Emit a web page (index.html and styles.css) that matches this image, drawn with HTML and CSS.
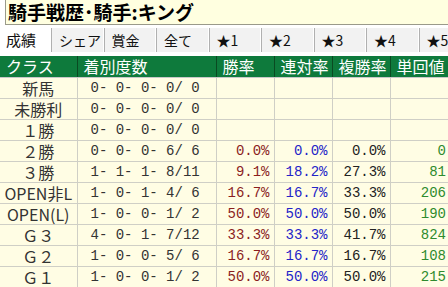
FILE: index.html
```html
<!DOCTYPE html>
<html lang="ja">
<head>
<meta charset="utf-8">
<link rel="stylesheet" href="styles.css">
</head>
<body>
<div class="title">騎手戦歴･騎手:キング</div>
<div class="tabs">
  <div class="tab active">成績</div>
  <div class="tab">シェア</div>
  <div class="tab">賞金</div>
  <div class="tab">全て</div>
  <div class="tab">★1</div>
  <div class="tab">★2</div>
  <div class="tab">★3</div>
  <div class="tab">★4</div>
  <div class="tab">★5</div>
</div>
<table class="grid">
  <thead>
    <tr><th class="h-class">クラス</th><th class="h-rec">着別度数</th><th class="h-pct">勝率</th><th class="h-pct">連対率</th><th class="h-pct">複勝率</th><th class="h-last">単回値</th></tr>
  </thead>
  <tbody>
    <tr><td class="cls">新馬</td><td class="rec">0- 0- 0- 0/ 0</td><td></td><td></td><td></td><td></td></tr>
    <tr><td class="cls">未勝利</td><td class="rec">0- 0- 0- 0/ 0</td><td></td><td></td><td></td><td></td></tr>
    <tr><td class="cls">１勝</td><td class="rec">0- 0- 0- 0/ 0</td><td></td><td></td><td></td><td></td></tr>
    <tr><td class="cls">２勝</td><td class="rec">0- 0- 0- 6/ 6</td><td class="num win">0.0%</td><td class="num ren">0.0%</td><td class="num fuku">0.0%</td><td class="num ret">0</td></tr>
    <tr><td class="cls">３勝</td><td class="rec">1- 1- 1- 8/11</td><td class="num win">9.1%</td><td class="num ren">18.2%</td><td class="num fuku">27.3%</td><td class="num ret">81</td></tr>
    <tr><td class="cls">OPEN非L</td><td class="rec">1- 0- 1- 4/ 6</td><td class="num win">16.7%</td><td class="num ren">16.7%</td><td class="num fuku">33.3%</td><td class="num ret">206</td></tr>
    <tr><td class="cls">OPEN(L)</td><td class="rec">1- 0- 0- 1/ 2</td><td class="num win">50.0%</td><td class="num ren">50.0%</td><td class="num fuku">50.0%</td><td class="num ret">190</td></tr>
    <tr><td class="cls">Ｇ３</td><td class="rec">4- 0- 1- 7/12</td><td class="num win">33.3%</td><td class="num ren">33.3%</td><td class="num fuku">41.7%</td><td class="num ret">824</td></tr>
    <tr><td class="cls">Ｇ２</td><td class="rec">1- 0- 0- 5/ 6</td><td class="num win">16.7%</td><td class="num ren">16.7%</td><td class="num fuku">16.7%</td><td class="num ret">108</td></tr>
    <tr><td class="cls">Ｇ１</td><td class="rec">1- 0- 0- 1/ 2</td><td class="num win">50.0%</td><td class="num ren">50.0%</td><td class="num fuku">50.0%</td><td class="num ret">215</td></tr>
  </tbody>
</table>
</body>
</html>
```

FILE: styles.css
```css
html, body {
  margin: 0;
  padding: 0;
  background: #ffffff;
  overflow: hidden;
}
body {
  width: 448px;
  height: 287px;
  font-family: "Noto Sans CJK JP", sans-serif;
  color: #222;
}
.title {
  margin-left: 5px;
  height: 24px;
  border-left: 1px solid #9a9a8a;
  border-bottom: 1px solid #9a9a8a;
  background: #ffffe0;
  font-weight: bold;
  font-size: 19px;
  line-height: 24px;
  padding-left: 2px;
  white-space: nowrap;
  color: #000;
}
.tabs {
  display: flex;
  margin-top: 3px;
  height: 24px;
  white-space: nowrap;
  overflow: hidden;
}
.tab {
  flex: 0 0 auto;
  width: 52.5px;
  box-sizing: border-box;
  padding-left: 7px;
  font-size: 14px;
  line-height: 24px;
  background: #f2f2f2;
  border-right: 1px solid #b0b0b0;
  box-shadow: inset -1px 0 0 #ffffff;
  color: #111;
}
.tab:last-child {
  flex: 1 1 auto;
  width: auto;
  border-right: 0;
  box-shadow: none;
}
.tab.active {
  background: #ffffff;
  width: 52px;
  padding-left: 6px;
  font-size: 15px;
}
.grid {
  margin-top: 4px;
  border-collapse: collapse;
  table-layout: fixed;
  width: 448px;
}
.grid th, .grid td {
  box-sizing: border-box;
}
.h-class { width: 77px; }
.h-rec { width: 139px; }
.h-pct { width: 58px; }
.h-last { width: 58px; }
.grid th {
  background: #0e7a3c;
  color: #ffffff;
  font-weight: normal;
  font-size: 16px;
  height: 21px;
  line-height: 20px;
  padding: 0 0 0 6px;
  text-align: left;
  border-right: 1px solid #0a4a22;
  border-bottom: 1px solid #c8c8c8;
  white-space: nowrap;
}
.grid th:last-child { border-right: 0; }
.grid td {
  background: #fffde4;
  height: 21px;
  line-height: 20px;
  padding: 0;
  border: 1px solid #cfcfc6;
  border-top: 0;
  white-space: pre;
}
.grid td:first-child { border-left: 0; }
.grid td:last-child { border-right: 0; }
.cls {
  text-align: center;
  font-size: 16px;
  color: #333;
}
.rec {
  font-family: "Liberation Mono", monospace;
  font-size: 14px;
  padding-left: 13px !important;
  color: #333;
}
.num {
  font-family: "Liberation Mono", monospace;
  font-size: 14px;
  text-align: right;
  padding-right: 4px !important;
}
.win { color: #8b1e1e; }
.ren { color: #2424c8; }
.fuku { color: #222; }
.ret { color: #2e8b2e; padding-right: 2px !important; }
```
